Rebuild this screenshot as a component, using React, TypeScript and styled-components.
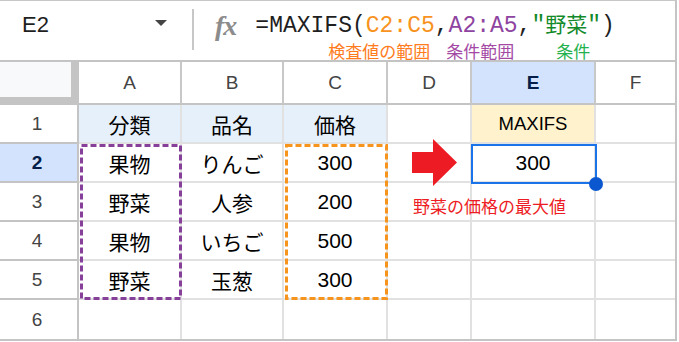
import { Fragment } from 'react'
import styled, { createGlobalStyle } from 'styled-components'

const GlobalStyle = createGlobalStyle`
  html, body {
    margin: 0;
    padding: 0;
    background: #ffffff;
  }
  body {
    font-family: "Liberation Sans", "Noto Sans CJK JP", sans-serif;
  }
`

const Frame = styled.div`
  position: relative;
  box-sizing: border-box;
  width: 677px;
  height: 341px;
  border-top: 1px solid #c7c7c7;
  border-right: 2px solid #c4c4c4;
  border-bottom: 2px solid #c4c4c4;
  background: #ffffff;
  overflow: hidden;
`

// formula bar
const FormulaBar = styled.div`
  box-sizing: border-box;
  height: 61px;
  display: flex;
  align-items: flex-start;
  border-bottom: 2px solid #c4c4c4;
`

const NameBox = styled.div`
  box-sizing: border-box;
  width: 180px;
  height: 24px;
  margin-top: 12px;
  padding: 0 13px 0 22px;
  display: flex;
  align-items: center;
  justify-content: space-between;
  font-size: 22px;
  line-height: 24px;
  color: #1f1f1f;
`

const Caret = styled.span`
  width: 0;
  height: 0;
  margin-bottom: 5px;
  border-left: 6px solid transparent;
  border-right: 6px solid transparent;
  border-top: 6px solid #444444;
`

const Divider = styled.div`
  width: 2px;
  height: 41px;
  margin-top: 8px;
  margin-left: 12px;
  background: #c7c7c7;
`

const FxIcon = styled.div`
  margin-left: 21px;
  margin-top: 12px;
  font-family: "Liberation Serif", serif;
  font-size: 28px;
  line-height: 26px;
  font-style: italic;
  font-weight: bold;
  color: #8c8c8c;
  letter-spacing: -1px;
`

const FormulaArea = styled.div`
  margin-left: 19px;
  display: flex;
  flex-direction: column;
`

const FormulaText = styled.div`
  margin-top: 12px;
  font-family: "Liberation Mono", "Noto Sans CJK JP", monospace;
  font-size: 23px;
  line-height: 26px;
  color: #1f1f1f;
  white-space: pre;
`

const Token = styled.span<{ $color: string; $cjk?: boolean }>`
  color: ${({ $color }) => $color};
  font-size: ${({ $cjk }) => ($cjk ? '21px' : 'inherit')};
`

const LabelRow = styled.div`
  display: flex;
  margin-top: 2px;
  padding-left: 73px;
`

const Label = styled.span<{ $color: string; $gap: number }>`
  margin-left: ${({ $gap }) => $gap}px;
  font-family: "Noto Sans CJK JP", sans-serif;
  font-size: 17px;
  line-height: 17px;
  color: ${({ $color }) => $color};
  white-space: nowrap;
`

// sheet grid
const Sheet = styled.div`
  position: relative;
  display: grid;
  grid-template-columns: 79px 103px 102px 104px 84px 124px 79px;
  grid-template-rows: 43px repeat(6, 39px);
`

const Corner = styled.div`
  box-sizing: border-box;
  background: #f8f9fa;
  border-right: 8px solid #c4c4c4;
  border-bottom: 8px solid #c4c4c4;
`

const ColHeader = styled.div<{ $active?: boolean; $last?: boolean }>`
  box-sizing: border-box;
  display: flex;
  align-items: center;
  justify-content: center;
  border-right: ${({ $last }) => ($last ? 'none' : '2px solid #c8c8c8')};
  border-bottom: 2px solid #c4c4c4;
  background: ${({ $active }) => ($active ? '#d3e3fd' : '#ffffff')};
  color: ${({ $active }) => ($active ? '#041e49' : '#444444')};
  font-weight: ${({ $active }) => ($active ? 'bold' : 'normal')};
  font-size: 19px;
`

const RowHeader = styled.div<{ $active?: boolean; $last?: boolean }>`
  box-sizing: border-box;
  display: flex;
  align-items: center;
  justify-content: center;
  padding-right: 3px;
  border-right: 2px solid #c4c4c4;
  border-bottom: ${({ $last }) => ($last ? 'none' : '2px solid #c4c4c4')};
  background: ${({ $active }) => ($active ? '#d3e3fd' : '#ffffff')};
  color: ${({ $active }) => ($active ? '#041e49' : '#444444')};
  font-weight: ${({ $active }) => ($active ? 'bold' : 'normal')};
  font-size: 19px;
`

const Cell = styled.div<{ $bg: string; $size: number; $lastCol?: boolean; $lastRow?: boolean }>`
  box-sizing: border-box;
  display: flex;
  align-items: center;
  justify-content: center;
  border-right: ${({ $lastCol }) => ($lastCol ? 'none' : '2px solid #e1e1e1')};
  border-bottom: ${({ $lastRow }) => ($lastRow ? 'none' : '2px solid #e1e1e1')};
  background: ${({ $bg }) => $bg};
  color: #000000;
  font-size: ${({ $size }) => $size}px;
  white-space: nowrap;
`

// overlays on the grid
const RangeBox = styled.svg`
  position: absolute;
  overflow: visible;
`

const Selection = styled.div`
  position: absolute;
  left: 471px;
  top: 82px;
  box-sizing: border-box;
  width: 126px;
  height: 40px;
  border: 2px solid #1a73e8;
`

const FillHandle = styled.div`
  position: absolute;
  left: 589px;
  top: 115px;
  width: 14px;
  height: 14px;
  border-radius: 50%;
  background: #0b57d0;
`

const Arrow = styled.svg`
  position: absolute;
  left: 412px;
  top: 77px;
`

const Note = styled.div`
  position: absolute;
  left: 413px;
  top: 134px;
  font-family: "Noto Sans CJK JP", sans-serif;
  font-size: 17px;
  line-height: 20px;
  color: #ed1c24;
  white-space: nowrap;
`

const columns = ['A', 'B', 'C', 'D', 'E', 'F']

const rows = [
  ['分類', '品名', '価格', '', 'MAXIFS', ''],
  ['果物', 'りんご', '300', '', '300', ''],
  ['野菜', '人参', '200', '', '', ''],
  ['果物', 'いちご', '500', '', '', ''],
  ['野菜', '玉葱', '300', '', '', ''],
  ['', '', '', '', '', ''],
]

function cellBg(r: number, c: number) {
  if (r === 0 && c < 3) return '#e6f0fb'
  if (r === 0 && c === 4) return '#fff2cc'
  return '#ffffff'
}

function Range({ x, y, w, h, color }: { x: number; y: number; w: number; h: number; color: string }) {
  return (
    <RangeBox style={{ left: x, top: y }} width={w} height={h}>
      <rect x={1.5} y={1.5} width={w - 3} height={h - 3} fill="none" stroke={color} strokeWidth={3} strokeDasharray="6 3" />
    </RangeBox>
  )
}

export default function App() {
  return (
    <>
      <GlobalStyle />
      <Frame>
        <FormulaBar>
          <NameBox>
            E2
            <Caret />
          </NameBox>
          <Divider />
          <FxIcon>fx</FxIcon>
          <FormulaArea>
            <FormulaText>
              =MAXIFS(<Token $color="#f7931e">C2:C5</Token>,<Token $color="#8e44a0">A2:A5</Token>,
              <Token $color="#128a2a">"</Token>
              <Token $color="#128a2a" $cjk>野菜</Token>
              <Token $color="#128a2a">"</Token>)
            </FormulaText>
            <LabelRow>
              <Label $color="#ff7b1c" $gap={0}>検査値の範囲</Label>
              <Label $color="#a349a4" $gap={16}>条件範囲</Label>
              <Label $color="#22b14c" $gap={42}>条件</Label>
            </LabelRow>
          </FormulaArea>
        </FormulaBar>

        <Sheet>
          <Corner />
          {columns.map((c, i) => (
            <ColHeader key={c} $active={c === 'E'} $last={i === columns.length - 1}>
              {c}
            </ColHeader>
          ))}
          {rows.map((row, r) => (
            <Fragment key={r}>
              <RowHeader $active={r === 1} $last={r === rows.length - 1}>
                {r + 1}
              </RowHeader>
              {row.map((v, c) => (
                <Cell
                  key={c}
                  $bg={cellBg(r, c)}
                  $size={v === 'MAXIFS' ? 18.5 : 21}
                  $lastCol={c === row.length - 1}
                  $lastRow={r === rows.length - 1}
                >
                  {v}
                </Cell>
              ))}
            </Fragment>
          ))}

          <Range x={80} y={82} w={102} h={156} color="#86409a" />
          <Range x={285} y={82} w={103} h={156} color="#f7941d" />
          <Arrow width={45} height={47} viewBox="0 0 45 47">
            <polygon points="0,13 21,13 21,0 45,23.5 21,47 21,34 0,34" fill="#ed1c24" />
          </Arrow>
          <Selection />
          <FillHandle />
          <Note>野菜の価格の最大値</Note>
        </Sheet>
      </Frame>
    </>
  )
}
